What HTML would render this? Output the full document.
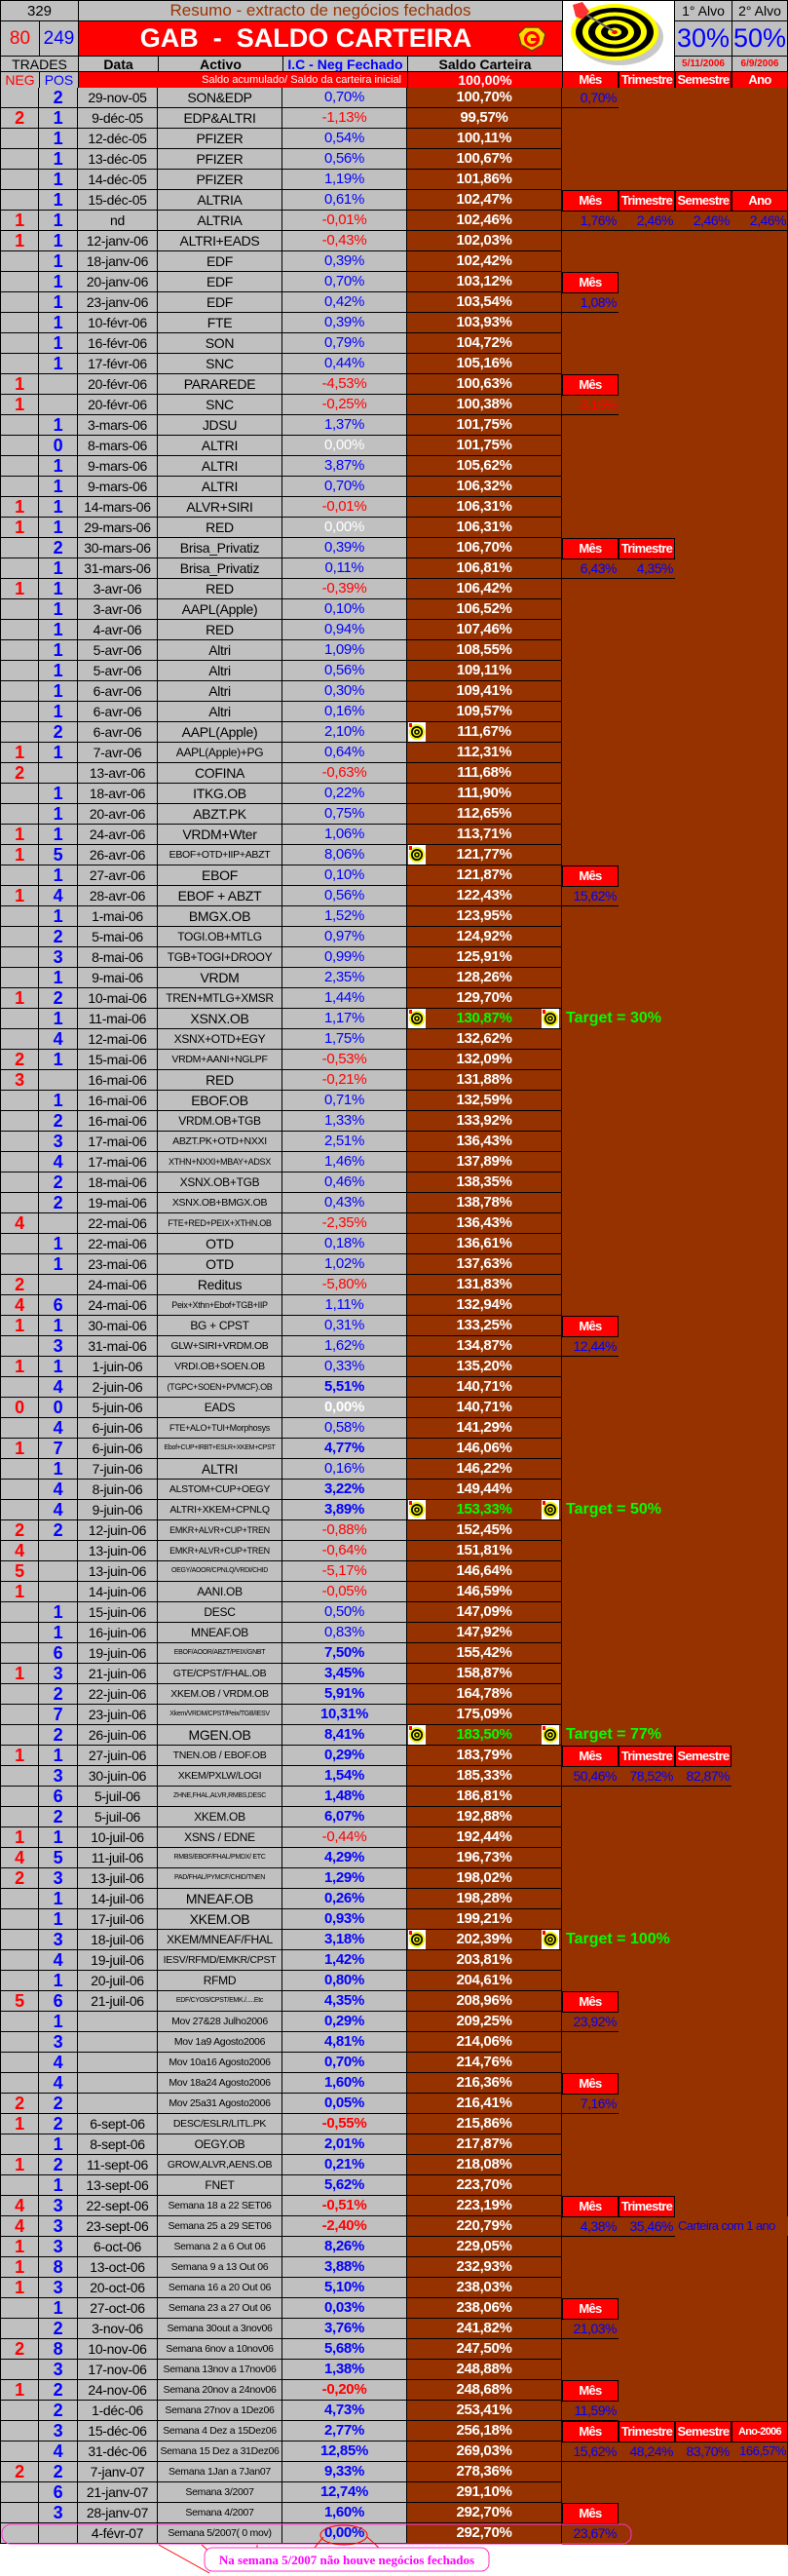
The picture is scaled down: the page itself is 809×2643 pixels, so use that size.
<!DOCTYPE html>
<html><head><meta charset="utf-8">
<style>
*{margin:0;padding:0;box-sizing:border-box}
body{width:809px;height:2643px;background:#fff;position:relative;overflow:hidden;font-family:"Liberation Sans Narrow","Liberation Sans",sans-serif}
.a{position:absolute}
.g{background:#c0c0c0}
.bd{border:1px solid #000}
.ctr{display:flex;align-items:center;justify-content:center;text-align:center;white-space:nowrap}
#rows{position:absolute;left:0;top:90px;width:577px}
.r{height:21px;display:flex;border-bottom:1px solid #000}
.r i{display:block;font-style:normal;border-right:1px solid #000;height:20px;text-align:center;line-height:20px;white-space:nowrap;overflow:hidden;background:#c0c0c0;font-size:14px;color:#000;letter-spacing:-0.3px}
.r i:nth-child(1){width:40px;border-left:1px solid #000;color:#f00;font-weight:bold;font-size:18px}
.r i:nth-child(2){width:40px;color:#00f;font-weight:bold;font-size:18px}
.r i:nth-child(3){width:82px}
.r i:nth-child(4){width:128px}
.r i:nth-child(5){width:128px;color:#00f;font-size:15px}
.r i:nth-child(6){width:159px;background:#963200;color:#fff;font-weight:bold;font-size:15px;position:relative}
.r i.rd{color:#f00}.r i.w{color:#fff}.r i.k{font-weight:bold}.r i.gr{color:#0f0}
.r i.s1{font-size:12px}.r i.s2{font-size:10.5px}.r i.s3{font-size:9px}.r i.s4{font-size:7px}
.col{position:absolute;top:90px;height:2521px;background:#963200;border-right:1px solid #000}
.h{position:absolute;width:58px;height:22px;background:#f00;color:#fff;font-weight:bold;border:1px solid #000;text-align:center;font-size:13px;letter-spacing:-0.7px;line-height:20px;font-family:"Liberation Sans Narrow","Liberation Sans",sans-serif;white-space:nowrap;overflow:hidden}
.v{position:absolute;width:58px;height:21px;color:#00f;text-align:right;border-bottom:1px solid #000;font-size:14px;letter-spacing:-0.5px;line-height:20px;padding-right:2px;white-space:nowrap}
.t{position:absolute;left:577px;width:116px;height:20px;background:#963200;color:#0f0;font-weight:bold;font-size:16px;line-height:20px;padding-left:4px;white-space:nowrap}
.ic{position:absolute;top:0;width:18px;height:20px}
</style></head><body>

<div class="a g bd ctr" style="left:0;top:0;width:81px;height:22px;font-size:15px;font-family:'Liberation Sans',sans-serif">329</div>
<div class="a g bd ctr" style="left:80px;top:0;width:498px;height:22px;font-size:17px;color:#993300;font-family:'Liberation Sans',sans-serif">Resumo - extracto de negócios fechados</div>
<div class="a g bd ctr" style="left:692px;top:0;width:60px;height:22px;font-size:14px;font-family:'Liberation Sans',sans-serif">1° Alvo</div>
<div class="a g bd ctr" style="left:751px;top:0;width:58px;height:22px;font-size:14px;font-family:'Liberation Sans',sans-serif">2° Alvo</div>
<div class="a g bd ctr" style="left:0;top:21px;width:41px;height:37px;font-size:19px;color:#f00">80</div>
<div class="a g bd ctr" style="left:40px;top:21px;width:41px;height:37px;font-size:19px;color:#00f">249</div>
<div class="a bd ctr" style="left:80px;top:21px;width:498px;height:37px;background:#f00;color:#fff;font-weight:bold;font-size:27px;font-family:'Liberation Sans',sans-serif;padding-right:30px">GAB&nbsp; - &nbsp;SALDO CARTEIRA</div>
<svg class="a" style="left:531px;top:27px" width="30" height="26" viewBox="0 0 30 26">
<polygon points="8,1 22,1 29,8 26,19 15,25 4,19 1,8" fill="#ffd800" stroke="#7a3a00" stroke-width="1.5"/>
<circle cx="15" cy="13" r="8" fill="#f00"/><circle cx="15" cy="13" r="5" fill="#ffd800"/>
<rect x="14" y="12" width="9" height="3" fill="#f00"/>
</svg>
<div class="a g bd ctr" style="left:692px;top:21px;width:60px;height:37px;font-size:27px;color:#00f;font-family:'Liberation Sans',sans-serif">30%</div>
<div class="a g bd ctr" style="left:751px;top:21px;width:58px;height:37px;font-size:27px;color:#00f;font-family:'Liberation Sans',sans-serif">50%</div>
<div class="a g bd ctr" style="left:0;top:57px;width:81px;height:17px;font-size:14px">TRADES</div>
<div class="a g bd ctr" style="left:80px;top:57px;width:83px;height:17px;font-size:14px;font-weight:bold">Data</div>
<div class="a g bd ctr" style="left:162px;top:57px;width:129px;height:17px;font-size:14px;font-weight:bold">Activo</div>
<div class="a g bd ctr" style="left:290px;top:57px;width:129px;height:17px;font-size:14px;font-weight:bold;color:#00f">I.C - Neg Fechado</div>
<div class="a g bd ctr" style="left:418px;top:57px;width:160px;height:17px;font-size:14px;font-weight:bold">Saldo Carteira</div>
<div class="a g bd ctr" style="left:692px;top:57px;width:60px;height:17px;font-size:10px;font-weight:bold;color:#f00">5/11/2006</div>
<div class="a g bd ctr" style="left:751px;top:57px;width:58px;height:17px;font-size:10px;font-weight:bold;color:#f00">6/9/2006</div>
<div class="a bd" style="left:577px;top:0;width:116px;height:74px;background:#fff"></div>
<svg class="a" style="left:578px;top:1px" width="114" height="72" viewBox="0 0 114 72">
<ellipse cx="55" cy="34" rx="45" ry="29" fill="#c8c8c8" transform="translate(3,3)"/>
<ellipse cx="53" cy="32" rx="45" ry="29" fill="#ffff00"/>
<ellipse cx="53" cy="32" rx="40" ry="25" fill="#000"/>
<ellipse cx="53" cy="32" rx="33" ry="20.5" fill="#ffff00"/>
<ellipse cx="53" cy="32" rx="27" ry="16.5" fill="#000"/>
<ellipse cx="53" cy="32" rx="20" ry="12.5" fill="#ffff00"/>
<ellipse cx="53" cy="32" rx="14" ry="8.5" fill="#000"/>
<ellipse cx="53" cy="32" rx="7" ry="4.5" fill="#ffff00"/>
<ellipse cx="53" cy="32" rx="3" ry="2" fill="#f00"/>
<line x1="52" y1="31" x2="22" y2="13" stroke="#666" stroke-width="2"/>
<polygon points="10,4 20,1 27,11 20,19 13,16" fill="#f33"/>
</svg>
<div class="a g bd ctr" style="left:0;top:73px;width:41px;height:18px;font-size:14px;color:#f00">NEG</div>
<div class="a g bd ctr" style="left:40px;top:73px;width:41px;height:18px;font-size:14px;color:#00f">POS</div>
<div class="a bd ctr" style="left:80px;top:73px;width:339px;height:18px;background:#f00;color:#fff;font-size:11px;font-family:'Liberation Sans',sans-serif;justify-content:flex-end;padding-right:6px">Saldo acumulado/ Saldo da carteira inicial</div>
<div class="a bd ctr" style="left:418px;top:73px;width:160px;height:18px;background:#f00;color:#fff;font-size:14px;font-weight:bold">100,00%</div>
<div class="h" style="left:577px;top:73px;height:18px;line-height:16px">Mês</div>
<div class="h" style="left:635px;top:73px;height:18px;line-height:16px">Trimestre</div>
<div class="h" style="left:693px;top:73px;height:18px;line-height:16px">Semestre</div>
<div class="h" style="left:751px;top:73px;height:18px;line-height:16px">Ano</div>

<div class="col" style="left:577px;width:59px"></div>
<div class="col" style="left:635px;width:59px"></div>
<div class="col" style="left:693px;width:59px"></div>
<div class="col" style="left:751px;width:58px"></div>

<div id="rows">
<div class="r"><i></i><i>2</i><i>29-nov-05</i><i>SON&amp;EDP</i><i>0,70%</i><i>100,70%</i></div>
<div class="r"><i>2</i><i>1</i><i>9-déc-05</i><i>EDP&amp;ALTRI</i><i class="rd">-1,13%</i><i>99,57%</i></div>
<div class="r"><i></i><i>1</i><i>12-déc-05</i><i>PFIZER</i><i>0,54%</i><i>100,11%</i></div>
<div class="r"><i></i><i>1</i><i>13-déc-05</i><i>PFIZER</i><i>0,56%</i><i>100,67%</i></div>
<div class="r"><i></i><i>1</i><i>14-déc-05</i><i>PFIZER</i><i>1,19%</i><i>101,86%</i></div>
<div class="r"><i></i><i>1</i><i>15-déc-05</i><i>ALTRIA</i><i>0,61%</i><i>102,47%</i></div>
<div class="r"><i>1</i><i>1</i><i>nd</i><i>ALTRIA</i><i class="rd">-0,01%</i><i>102,46%</i></div>
<div class="r"><i>1</i><i>1</i><i>12-janv-06</i><i>ALTRI+EADS</i><i class="rd">-0,43%</i><i>102,03%</i></div>
<div class="r"><i></i><i>1</i><i>18-janv-06</i><i>EDF</i><i>0,39%</i><i>102,42%</i></div>
<div class="r"><i></i><i>1</i><i>20-janv-06</i><i>EDF</i><i>0,70%</i><i>103,12%</i></div>
<div class="r"><i></i><i>1</i><i>23-janv-06</i><i>EDF</i><i>0,42%</i><i>103,54%</i></div>
<div class="r"><i></i><i>1</i><i>10-févr-06</i><i>FTE</i><i>0,39%</i><i>103,93%</i></div>
<div class="r"><i></i><i>1</i><i>16-févr-06</i><i>SON</i><i>0,79%</i><i>104,72%</i></div>
<div class="r"><i></i><i>1</i><i>17-févr-06</i><i>SNC</i><i>0,44%</i><i>105,16%</i></div>
<div class="r"><i>1</i><i></i><i>20-févr-06</i><i>PARAREDE</i><i class="rd">-4,53%</i><i>100,63%</i></div>
<div class="r"><i>1</i><i></i><i>20-févr-06</i><i>SNC</i><i class="rd">-0,25%</i><i>100,38%</i></div>
<div class="r"><i></i><i>1</i><i>3-mars-06</i><i>JDSU</i><i>1,37%</i><i>101,75%</i></div>
<div class="r"><i></i><i>0</i><i>8-mars-06</i><i>ALTRI</i><i class="w">0,00%</i><i>101,75%</i></div>
<div class="r"><i></i><i>1</i><i>9-mars-06</i><i>ALTRI</i><i>3,87%</i><i>105,62%</i></div>
<div class="r"><i></i><i>1</i><i>9-mars-06</i><i>ALTRI</i><i>0,70%</i><i>106,32%</i></div>
<div class="r"><i>1</i><i>1</i><i>14-mars-06</i><i>ALVR+SIRI</i><i class="rd">-0,01%</i><i>106,31%</i></div>
<div class="r"><i>1</i><i>1</i><i>29-mars-06</i><i>RED</i><i class="w">0,00%</i><i>106,31%</i></div>
<div class="r"><i></i><i>2</i><i>30-mars-06</i><i>Brisa_Privatiz</i><i>0,39%</i><i>106,70%</i></div>
<div class="r"><i></i><i>1</i><i>31-mars-06</i><i>Brisa_Privatiz</i><i>0,11%</i><i>106,81%</i></div>
<div class="r"><i>1</i><i>1</i><i>3-avr-06</i><i>RED</i><i class="rd">-0,39%</i><i>106,42%</i></div>
<div class="r"><i></i><i>1</i><i>3-avr-06</i><i>AAPL(Apple)</i><i>0,10%</i><i>106,52%</i></div>
<div class="r"><i></i><i>1</i><i>4-avr-06</i><i>RED</i><i>0,94%</i><i>107,46%</i></div>
<div class="r"><i></i><i>1</i><i>5-avr-06</i><i>Altri</i><i>1,09%</i><i>108,55%</i></div>
<div class="r"><i></i><i>1</i><i>5-avr-06</i><i>Altri</i><i>0,56%</i><i>109,11%</i></div>
<div class="r"><i></i><i>1</i><i>6-avr-06</i><i>Altri</i><i>0,30%</i><i>109,41%</i></div>
<div class="r"><i></i><i>1</i><i>6-avr-06</i><i>Altri</i><i>0,16%</i><i>109,57%</i></div>
<div class="r"><i></i><i>2</i><i>6-avr-06</i><i>AAPL(Apple)</i><i>2,10%</i><i><svg class="ic" style="left:1px" viewBox="0 0 18 20"><rect width="18" height="20" fill="#fff"/><circle cx="9" cy="10" r="8" fill="#ee0"/><circle cx="9" cy="10" r="6" fill="#000"/><circle cx="9" cy="10" r="4.3" fill="#ee0"/><circle cx="9" cy="10" r="2.8" fill="#000"/><circle cx="9" cy="10" r="1.3" fill="#ee0"/><rect x="1" y="1" width="3" height="4" fill="#f00"/></svg>111,67%</i></div>
<div class="r"><i>1</i><i>1</i><i>7-avr-06</i><i class="s1">AAPL(Apple)+PG</i><i>0,64%</i><i>112,31%</i></div>
<div class="r"><i>2</i><i></i><i>13-avr-06</i><i>COFINA</i><i class="rd">-0,63%</i><i>111,68%</i></div>
<div class="r"><i></i><i>1</i><i>18-avr-06</i><i>ITKG.OB</i><i>0,22%</i><i>111,90%</i></div>
<div class="r"><i></i><i>1</i><i>20-avr-06</i><i>ABZT.PK</i><i>0,75%</i><i>112,65%</i></div>
<div class="r"><i>1</i><i>1</i><i>24-avr-06</i><i>VRDM+Wter</i><i>1,06%</i><i>113,71%</i></div>
<div class="r"><i>1</i><i>5</i><i>26-avr-06</i><i class="s2">EBOF+OTD+IIP+ABZT</i><i>8,06%</i><i><svg class="ic" style="left:1px" viewBox="0 0 18 20"><rect width="18" height="20" fill="#fff"/><circle cx="9" cy="10" r="8" fill="#ee0"/><circle cx="9" cy="10" r="6" fill="#000"/><circle cx="9" cy="10" r="4.3" fill="#ee0"/><circle cx="9" cy="10" r="2.8" fill="#000"/><circle cx="9" cy="10" r="1.3" fill="#ee0"/><rect x="1" y="1" width="3" height="4" fill="#f00"/></svg>121,77%</i></div>
<div class="r"><i></i><i>1</i><i>27-avr-06</i><i>EBOF</i><i>0,10%</i><i>121,87%</i></div>
<div class="r"><i>1</i><i>4</i><i>28-avr-06</i><i>EBOF + ABZT</i><i>0,56%</i><i>122,43%</i></div>
<div class="r"><i></i><i>1</i><i>1-mai-06</i><i>BMGX.OB</i><i>1,52%</i><i>123,95%</i></div>
<div class="r"><i></i><i>2</i><i>5-mai-06</i><i class="s1">TOGI.OB+MTLG</i><i>0,97%</i><i>124,92%</i></div>
<div class="r"><i></i><i>3</i><i>8-mai-06</i><i class="s1">TGB+TOGI+DROOY</i><i>0,99%</i><i>125,91%</i></div>
<div class="r"><i></i><i>1</i><i>9-mai-06</i><i>VRDM</i><i>2,35%</i><i>128,26%</i></div>
<div class="r"><i>1</i><i>2</i><i>10-mai-06</i><i class="s1">TREN+MTLG+XMSR</i><i>1,44%</i><i>129,70%</i></div>
<div class="r"><i></i><i>1</i><i>11-mai-06</i><i>XSNX.OB</i><i>1,17%</i><i class="gr"><svg class="ic" style="left:1px" viewBox="0 0 18 20"><rect width="18" height="20" fill="#fff"/><circle cx="9" cy="10" r="8" fill="#ee0"/><circle cx="9" cy="10" r="6" fill="#000"/><circle cx="9" cy="10" r="4.3" fill="#ee0"/><circle cx="9" cy="10" r="2.8" fill="#000"/><circle cx="9" cy="10" r="1.3" fill="#ee0"/><rect x="1" y="1" width="3" height="4" fill="#f00"/></svg>130,87%<svg class="ic" style="left:138px" viewBox="0 0 18 20"><rect width="18" height="20" fill="#fff"/><circle cx="9" cy="10" r="8" fill="#ee0"/><circle cx="9" cy="10" r="6" fill="#000"/><circle cx="9" cy="10" r="4.3" fill="#ee0"/><circle cx="9" cy="10" r="2.8" fill="#000"/><circle cx="9" cy="10" r="1.3" fill="#ee0"/><rect x="1" y="1" width="3" height="4" fill="#f00"/></svg></i></div>
<div class="r"><i></i><i>4</i><i>12-mai-06</i><i class="s1">XSNX+OTD+EGY</i><i>1,75%</i><i>132,62%</i></div>
<div class="r"><i>2</i><i>1</i><i>15-mai-06</i><i class="s2">VRDM+AANI+NGLPF</i><i class="rd">-0,53%</i><i>132,09%</i></div>
<div class="r"><i>3</i><i></i><i>16-mai-06</i><i>RED</i><i class="rd">-0,21%</i><i>131,88%</i></div>
<div class="r"><i></i><i>1</i><i>16-mai-06</i><i>EBOF.OB</i><i>0,71%</i><i>132,59%</i></div>
<div class="r"><i></i><i>2</i><i>16-mai-06</i><i class="s1">VRDM.OB+TGB</i><i>1,33%</i><i>133,92%</i></div>
<div class="r"><i></i><i>3</i><i>17-mai-06</i><i class="s2">ABZT.PK+OTD+NXXI</i><i>2,51%</i><i>136,43%</i></div>
<div class="r"><i></i><i>4</i><i>17-mai-06</i><i class="s3">XTHN+NXXI+MBAY+ADSX</i><i>1,46%</i><i>137,89%</i></div>
<div class="r"><i></i><i>2</i><i>18-mai-06</i><i class="s1">XSNX.OB+TGB</i><i>0,46%</i><i>138,35%</i></div>
<div class="r"><i></i><i>2</i><i>19-mai-06</i><i class="s2">XSNX.OB+BMGX.OB</i><i>0,43%</i><i>138,78%</i></div>
<div class="r"><i>4</i><i></i><i>22-mai-06</i><i class="s3">FTE+RED+PEIX+XTHN.OB</i><i class="rd">-2,35%</i><i>136,43%</i></div>
<div class="r"><i></i><i>1</i><i>22-mai-06</i><i>OTD</i><i>0,18%</i><i>136,61%</i></div>
<div class="r"><i></i><i>1</i><i>23-mai-06</i><i>OTD</i><i>1,02%</i><i>137,63%</i></div>
<div class="r"><i>2</i><i></i><i>24-mai-06</i><i>Reditus</i><i class="rd">-5,80%</i><i>131,83%</i></div>
<div class="r"><i>4</i><i>6</i><i>24-mai-06</i><i class="s3">Peix+Xthn+Ebof+TGB+IIP</i><i>1,11%</i><i>132,94%</i></div>
<div class="r"><i>1</i><i>1</i><i>30-mai-06</i><i class="s1">BG + CPST</i><i>0,31%</i><i>133,25%</i></div>
<div class="r"><i></i><i>3</i><i>31-mai-06</i><i class="s2">GLW+SIRI+VRDM.OB</i><i>1,62%</i><i>134,87%</i></div>
<div class="r"><i>1</i><i>1</i><i>1-juin-06</i><i class="s2">VRDI.OB+SOEN.OB</i><i>0,33%</i><i>135,20%</i></div>
<div class="r"><i></i><i>4</i><i>2-juin-06</i><i class="s3">(TGPC+SOEN+PVMCF).OB</i><i class="k">5,51%</i><i>140,71%</i></div>
<div class="r"><i>0</i><i>0</i><i>5-juin-06</i><i class="s1">EADS</i><i class="w k">0,00%</i><i>140,71%</i></div>
<div class="r"><i></i><i>4</i><i>6-juin-06</i><i class="s3">FTE+ALO+TUI+Morphosys</i><i>0,58%</i><i>141,29%</i></div>
<div class="r"><i>1</i><i>7</i><i>6-juin-06</i><i class="s4">Ebof+CUP+IRBT+ESLR+XKEM+CPST</i><i class="k">4,77%</i><i>146,06%</i></div>
<div class="r"><i></i><i>1</i><i>7-juin-06</i><i>ALTRI</i><i>0,16%</i><i>146,22%</i></div>
<div class="r"><i></i><i>4</i><i>8-juin-06</i><i class="s2">ALSTOM+CUP+OEGY</i><i class="k">3,22%</i><i>149,44%</i></div>
<div class="r"><i></i><i>4</i><i>9-juin-06</i><i class="s2">ALTRI+XKEM+CPNLQ</i><i class="k">3,89%</i><i class="gr"><svg class="ic" style="left:1px" viewBox="0 0 18 20"><rect width="18" height="20" fill="#fff"/><circle cx="9" cy="10" r="8" fill="#ee0"/><circle cx="9" cy="10" r="6" fill="#000"/><circle cx="9" cy="10" r="4.3" fill="#ee0"/><circle cx="9" cy="10" r="2.8" fill="#000"/><circle cx="9" cy="10" r="1.3" fill="#ee0"/><rect x="1" y="1" width="3" height="4" fill="#f00"/></svg>153,33%<svg class="ic" style="left:138px" viewBox="0 0 18 20"><rect width="18" height="20" fill="#fff"/><circle cx="9" cy="10" r="8" fill="#ee0"/><circle cx="9" cy="10" r="6" fill="#000"/><circle cx="9" cy="10" r="4.3" fill="#ee0"/><circle cx="9" cy="10" r="2.8" fill="#000"/><circle cx="9" cy="10" r="1.3" fill="#ee0"/><rect x="1" y="1" width="3" height="4" fill="#f00"/></svg></i></div>
<div class="r"><i>2</i><i>2</i><i>12-juin-06</i><i class="s3">EMKR+ALVR+CUP+TREN</i><i class="rd">-0,88%</i><i>152,45%</i></div>
<div class="r"><i>4</i><i></i><i>13-juin-06</i><i class="s3">EMKR+ALVR+CUP+TREN</i><i class="rd">-0,64%</i><i>151,81%</i></div>
<div class="r"><i>5</i><i></i><i>13-juin-06</i><i class="s4">OEGY/AOOR/CPNLQ/VRDI/CHID</i><i class="rd">-5,17%</i><i>146,64%</i></div>
<div class="r"><i>1</i><i></i><i>14-juin-06</i><i class="s1">AANI.OB</i><i class="rd">-0,05%</i><i>146,59%</i></div>
<div class="r"><i></i><i>1</i><i>15-juin-06</i><i class="s1">DESC</i><i>0,50%</i><i>147,09%</i></div>
<div class="r"><i></i><i>1</i><i>16-juin-06</i><i class="s1">MNEAF.OB</i><i>0,83%</i><i>147,92%</i></div>
<div class="r"><i></i><i>6</i><i>19-juin-06</i><i class="s4">EBOF/AOOR/ABZT/PEIX/GNBT</i><i class="k">7,50%</i><i>155,42%</i></div>
<div class="r"><i>1</i><i>3</i><i>21-juin-06</i><i class="s2">GTE/CPST/FHAL.OB</i><i class="k">3,45%</i><i>158,87%</i></div>
<div class="r"><i></i><i>2</i><i>22-juin-06</i><i class="s2">XKEM.OB / VRDM.OB</i><i class="k">5,91%</i><i>164,78%</i></div>
<div class="r"><i></i><i>7</i><i>23-juin-06</i><i class="s4">Xkem/VRDM/CPST/Peix/TGB/IESV</i><i class="k">10,31%</i><i>175,09%</i></div>
<div class="r"><i></i><i>2</i><i>26-juin-06</i><i>MGEN.OB</i><i class="k">8,41%</i><i class="gr"><svg class="ic" style="left:1px" viewBox="0 0 18 20"><rect width="18" height="20" fill="#fff"/><circle cx="9" cy="10" r="8" fill="#ee0"/><circle cx="9" cy="10" r="6" fill="#000"/><circle cx="9" cy="10" r="4.3" fill="#ee0"/><circle cx="9" cy="10" r="2.8" fill="#000"/><circle cx="9" cy="10" r="1.3" fill="#ee0"/><rect x="1" y="1" width="3" height="4" fill="#f00"/></svg>183,50%<svg class="ic" style="left:138px" viewBox="0 0 18 20"><rect width="18" height="20" fill="#fff"/><circle cx="9" cy="10" r="8" fill="#ee0"/><circle cx="9" cy="10" r="6" fill="#000"/><circle cx="9" cy="10" r="4.3" fill="#ee0"/><circle cx="9" cy="10" r="2.8" fill="#000"/><circle cx="9" cy="10" r="1.3" fill="#ee0"/><rect x="1" y="1" width="3" height="4" fill="#f00"/></svg></i></div>
<div class="r"><i>1</i><i>1</i><i>27-juin-06</i><i class="s2">TNEN.OB / EBOF.OB</i><i class="k">0,29%</i><i>183,79%</i></div>
<div class="r"><i></i><i>3</i><i>30-juin-06</i><i class="s2">XKEM/PXLW/LOGI</i><i class="k">1,54%</i><i>185,33%</i></div>
<div class="r"><i></i><i>6</i><i>5-juil-06</i><i class="s4">ZHNE,FHAL,ALVR,RMBS,DESC</i><i class="k">1,48%</i><i>186,81%</i></div>
<div class="r"><i></i><i>2</i><i>5-juil-06</i><i class="s1">XKEM.OB</i><i class="k">6,07%</i><i>192,88%</i></div>
<div class="r"><i>1</i><i>1</i><i>10-juil-06</i><i class="s1">XSNS / EDNE</i><i class="rd">-0,44%</i><i>192,44%</i></div>
<div class="r"><i>4</i><i>5</i><i>11-juil-06</i><i class="s4">RMBS/EBOF/FHAL/PMDX/ ETC</i><i class="k">4,29%</i><i>196,73%</i></div>
<div class="r"><i>2</i><i>3</i><i>13-juil-06</i><i class="s4">PAD/FHAL/PYMCF/CHID/TNEN</i><i class="k">1,29%</i><i>198,02%</i></div>
<div class="r"><i></i><i>1</i><i>14-juil-06</i><i>MNEAF.OB</i><i class="k">0,26%</i><i>198,28%</i></div>
<div class="r"><i></i><i>1</i><i>17-juil-06</i><i>XKEM.OB</i><i class="k">0,93%</i><i>199,21%</i></div>
<div class="r"><i></i><i>3</i><i>18-juil-06</i><i class="s1">XKEM/MNEAF/FHAL</i><i class="k">3,18%</i><i><svg class="ic" style="left:1px" viewBox="0 0 18 20"><rect width="18" height="20" fill="#fff"/><circle cx="9" cy="10" r="8" fill="#ee0"/><circle cx="9" cy="10" r="6" fill="#000"/><circle cx="9" cy="10" r="4.3" fill="#ee0"/><circle cx="9" cy="10" r="2.8" fill="#000"/><circle cx="9" cy="10" r="1.3" fill="#ee0"/><rect x="1" y="1" width="3" height="4" fill="#f00"/></svg>202,39%<svg class="ic" style="left:138px" viewBox="0 0 18 20"><rect width="18" height="20" fill="#fff"/><circle cx="9" cy="10" r="8" fill="#ee0"/><circle cx="9" cy="10" r="6" fill="#000"/><circle cx="9" cy="10" r="4.3" fill="#ee0"/><circle cx="9" cy="10" r="2.8" fill="#000"/><circle cx="9" cy="10" r="1.3" fill="#ee0"/><rect x="1" y="1" width="3" height="4" fill="#f00"/></svg></i></div>
<div class="r"><i></i><i>4</i><i>19-juil-06</i><i class="s2">IESV/RFMD/EMKR/CPST</i><i class="k">1,42%</i><i>203,81%</i></div>
<div class="r"><i></i><i>1</i><i>20-juil-06</i><i class="s1">RFMD</i><i class="k">0,80%</i><i>204,61%</i></div>
<div class="r"><i>5</i><i>6</i><i>21-juil-06</i><i class="s4">EDF/CYOS/CPST/EMK./.....Etc</i><i class="k">4,35%</i><i>208,96%</i></div>
<div class="r"><i></i><i>1</i><i></i><i class="s2">Mov 27&amp;28 Julho2006</i><i class="k">0,29%</i><i>209,25%</i></div>
<div class="r"><i></i><i>3</i><i></i><i class="s2">Mov 1a9 Agosto2006</i><i class="k">4,81%</i><i>214,06%</i></div>
<div class="r"><i></i><i>4</i><i></i><i class="s2">Mov 10a16 Agosto2006</i><i class="k">0,70%</i><i>214,76%</i></div>
<div class="r"><i></i><i>4</i><i></i><i class="s2">Mov 18a24 Agosto2006</i><i class="k">1,60%</i><i>216,36%</i></div>
<div class="r"><i>2</i><i>2</i><i></i><i class="s2">Mov 25a31 Agosto2006</i><i class="k">0,05%</i><i>216,41%</i></div>
<div class="r"><i>1</i><i>2</i><i>6-sept-06</i><i class="s2">DESC/ESLR/LITL.PK</i><i class="rd k">-0,55%</i><i>215,86%</i></div>
<div class="r"><i></i><i>1</i><i>8-sept-06</i><i class="s1">OEGY.OB</i><i class="k">2,01%</i><i>217,87%</i></div>
<div class="r"><i>1</i><i>2</i><i>11-sept-06</i><i class="s2">GROW,ALVR,AENS.OB</i><i class="k">0,21%</i><i>218,08%</i></div>
<div class="r"><i></i><i>1</i><i>13-sept-06</i><i class="s1">FNET</i><i class="k">5,62%</i><i>223,70%</i></div>
<div class="r"><i>4</i><i>3</i><i>22-sept-06</i><i class="s2">Semana 18 a 22 SET06</i><i class="rd k">-0,51%</i><i>223,19%</i></div>
<div class="r"><i>4</i><i>3</i><i>23-sept-06</i><i class="s2">Semana 25 a 29 SET06</i><i class="rd k">-2,40%</i><i>220,79%</i></div>
<div class="r"><i>1</i><i>3</i><i>6-oct-06</i><i class="s2">Semana 2 a 6 Out 06</i><i class="k">8,26%</i><i>229,05%</i></div>
<div class="r"><i>1</i><i>8</i><i>13-oct-06</i><i class="s2">Semana 9 a 13 Out 06</i><i class="k">3,88%</i><i>232,93%</i></div>
<div class="r"><i>1</i><i>3</i><i>20-oct-06</i><i class="s2">Semana 16 a 20 Out 06</i><i class="k">5,10%</i><i>238,03%</i></div>
<div class="r"><i></i><i>1</i><i>27-oct-06</i><i class="s2">Semana 23 a 27 Out 06</i><i class="k">0,03%</i><i>238,06%</i></div>
<div class="r"><i></i><i>2</i><i>3-nov-06</i><i class="s2">Semana 30out a 3nov06</i><i class="k">3,76%</i><i>241,82%</i></div>
<div class="r"><i>2</i><i>8</i><i>10-nov-06</i><i class="s2">Semana 6nov a 10nov06</i><i class="k">5,68%</i><i>247,50%</i></div>
<div class="r"><i></i><i>3</i><i>17-nov-06</i><i class="s2">Semana 13nov a 17nov06</i><i class="k">1,38%</i><i>248,88%</i></div>
<div class="r"><i>1</i><i>2</i><i>24-nov-06</i><i class="s2">Semana 20nov a 24nov06</i><i class="rd k">-0,20%</i><i>248,68%</i></div>
<div class="r"><i></i><i>2</i><i>1-déc-06</i><i class="s2">Semana 27nov a 1Dez06</i><i class="k">4,73%</i><i>253,41%</i></div>
<div class="r"><i></i><i>3</i><i>15-déc-06</i><i class="s2">Semana 4 Dez a 15Dez06</i><i class="k">2,77%</i><i>256,18%</i></div>
<div class="r"><i></i><i>4</i><i>31-déc-06</i><i class="s2">Semana 15 Dez a 31Dez06</i><i class="k">12,85%</i><i>269,03%</i></div>
<div class="r"><i>2</i><i>2</i><i>7-janv-07</i><i class="s2">Semana 1Jan a 7Jan07</i><i class="k">9,33%</i><i>278,36%</i></div>
<div class="r"><i></i><i>6</i><i>21-janv-07</i><i class="s2">Semana 3/2007</i><i class="k">12,74%</i><i>291,10%</i></div>
<div class="r"><i></i><i>3</i><i>28-janv-07</i><i class="s2">Semana 4/2007</i><i class="k">1,60%</i><i>292,70%</i></div>
<div class="r"><i></i><i></i><i>4-févr-07</i><i class="s2">Semana 5/2007( 0 mov)</i><i class="k">0,00%</i><i>292,70%</i></div>
</div>

<div class="v" style="left:577px;top:90px">0,70%</div>
<div class="h" style="left:577px;top:195px">Mês</div><div class="h" style="left:635px;top:195px">Trimestre</div><div class="h" style="left:693px;top:195px">Semestre</div><div class="h" style="left:751px;top:195px">Ano</div>
<div class="v" style="left:577px;top:216px">1,76%</div><div class="v" style="left:635px;top:216px">2,46%</div><div class="v" style="left:693px;top:216px">2,46%</div><div class="v" style="left:751px;top:216px">2,46%</div>
<div class="h" style="left:577px;top:279px">Mês</div><div class="v" style="left:577px;top:300px">1,08%</div>
<div class="h" style="left:577px;top:384px">Mês</div><div class="v" style="left:577px;top:405px;color:#f00">-3,16%</div>
<div class="h" style="left:577px;top:552px">Mês</div><div class="h" style="left:635px;top:552px">Trimestre</div>
<div class="v" style="left:577px;top:573px">6,43%</div><div class="v" style="left:635px;top:573px">4,35%</div>
<div class="h" style="left:577px;top:888px">Mês</div><div class="v" style="left:577px;top:909px">15,62%</div>
<div class="t" style="top:1035px">Target = 30%</div>
<div class="h" style="left:577px;top:1350px">Mês</div><div class="v" style="left:577px;top:1371px">12,44%</div>
<div class="t" style="top:1539px">Target = 50%</div>
<div class="t" style="top:1770px">Target = 77%</div>
<div class="h" style="left:577px;top:1791px">Mês</div><div class="h" style="left:635px;top:1791px">Trimestre</div><div class="h" style="left:693px;top:1791px">Semestre</div>
<div class="v" style="left:577px;top:1812px">50,46%</div><div class="v" style="left:635px;top:1812px">78,52%</div><div class="v" style="left:693px;top:1812px">82,87%</div>
<div class="t" style="top:1980px">Target = 100%</div>
<div class="h" style="left:577px;top:2043px">Mês</div><div class="v" style="left:577px;top:2064px">23,92%</div>
<div class="h" style="left:577px;top:2127px">Mês</div><div class="v" style="left:577px;top:2148px">7,16%</div>
<div class="h" style="left:577px;top:2253px">Mês</div><div class="h" style="left:635px;top:2253px">Trimestre</div>
<div class="v" style="left:577px;top:2274px">4,38%</div><div class="v" style="left:635px;top:2274px">35,46%</div>
<div class="a" style="left:694px;top:2274px;width:115px;height:20px;background:#963200;color:#00f;font-size:13px;letter-spacing:-0.6px;line-height:20px;white-space:nowrap;padding-left:2px;overflow:hidden">Carteira com 1 ano</div>
<div class="h" style="left:577px;top:2358px">Mês</div><div class="v" style="left:577px;top:2379px">21,03%</div>
<div class="h" style="left:577px;top:2442px">Mês</div><div class="v" style="left:577px;top:2463px">11,59%</div>
<div class="h" style="left:577px;top:2484px">Mês</div><div class="h" style="left:635px;top:2484px">Trimestre</div><div class="h" style="left:693px;top:2484px">Semestre</div><div class="h" style="left:751px;top:2484px;font-size:11px">Ano-2006</div>
<div class="v" style="left:577px;top:2505px">15,62%</div><div class="v" style="left:635px;top:2505px">48,24%</div><div class="v" style="left:693px;top:2505px">83,70%</div><div class="v" style="left:751px;top:2505px;font-size:13px">166,57%</div>
<div class="h" style="left:577px;top:2568px">Mês</div><div class="v" style="left:577px;top:2589px;border-bottom:none">23,67%</div>

<svg class="a" style="left:0;top:2585px" width="809" height="58" viewBox="0 0 809 58">
<rect x="2" y="5" width="646" height="20" rx="9" fill="none" stroke="#ff33cc" stroke-width="1"/>
<ellipse cx="353" cy="16" rx="24" ry="10" fill="none" stroke="#ff0000" stroke-width="1"/>
<line x1="163" y1="26" x2="215" y2="55" stroke="#ff0000" stroke-width="1"/>
<line x1="207" y1="26" x2="215" y2="33" stroke="#ff0000" stroke-width="1"/>
<line x1="264" y1="26" x2="264" y2="30" stroke="#ff0000" stroke-width="1"/>
<line x1="322" y1="30" x2="332" y2="18" stroke="#ff0000" stroke-width="1"/>
<line x1="377" y1="18" x2="390" y2="30" stroke="#ff0000" stroke-width="1"/>
<rect x="210" y="29" width="292" height="24" rx="8" fill="#fff" stroke="#ff33cc" stroke-width="1"/>
<text x="356" y="46" text-anchor="middle" font-family="Liberation Serif,serif" font-weight="bold" font-size="13" fill="#ff00ff">Na semana 5/2007 não houve negócios fechados</text>
</svg>
</body></html>
